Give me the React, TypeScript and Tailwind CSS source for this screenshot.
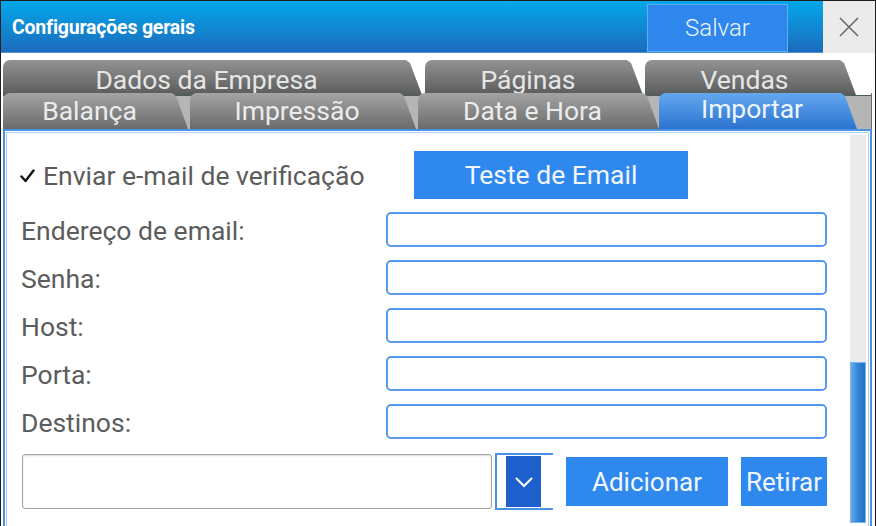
import React from "react";

const clip =
  "[clip-path:polygon(0_0,calc(100%_-_16px)_0,calc(100%_-_12px)_3px,100%_100%,0_100%)]";

function TopTab({ label, className }: { label: string; className: string }) {
  return (
    <div
      className={`${className} h-full rounded-tl-[7px] ${clip} bg-[linear-gradient(#939393,#5a5b5b)] flex items-center justify-center pr-[12px] pt-[5px] text-[26.5px] leading-none text-[#e6e6e6]`}
    >
      {label}
    </div>
  );
}

function BottomTab({
  label,
  className,
  active,
}: {
  label: string;
  className: string;
  active?: boolean;
}) {
  return (
    <div
      className={`${className} h-full rounded-tl-[7px] ${clip} flex items-center justify-center pr-[12px] text-[26.5px] leading-none ${
        active
          ? "bg-[linear-gradient(#65a8ef,#2b73d0)] text-[#eef5ff] pb-[3px]"
          : "bg-[linear-gradient(#a4a4a4,#696a6a)] text-[#ececec] pt-[1px]"
      }`}
    >
      {label}
    </div>
  );
}

function Field({ label }: { label: string }) {
  return (
    <div className="flex items-center h-[35px] mt-[13px]">
      <div className="w-[366px] pl-[1px] pt-[3px] text-[26.5px] leading-none text-[#5c5c5c]">{label}</div>
      <div className="w-[441px] h-[35px] rounded-[5px] border-2 border-[#559aea] bg-white" />
    </div>
  );
}

export default function App() {
  return (
    <div className="w-[876px] h-[526px] overflow-hidden bg-white flex flex-col border-l border-r border-t border-[#1e1e1e] [font-family:Roboto,sans-serif]">
      {/* Title bar */}
      <div className="flex h-[52px] shrink-0">
        <div className="flex-1 flex items-start bg-[linear-gradient(#03a8ea,#1c6bbd)] border-b border-[#4e8fd3]">
          <div className="pl-[11px] pt-[2px] h-full flex items-center text-[19.5px] font-bold text-white tracking-[-0.2px]">
            Configurações gerais
          </div>
          <div className="ml-auto mr-[35px] mt-[3px] w-[141px] h-[48px] bg-[#2f86ec] border border-[#62aef2] flex items-center justify-center text-[24px] font-light text-[#eaf3ff]">
            Salvar
          </div>
        </div>
        <div className="w-[52px] bg-[#ebebeb] flex items-center justify-center">
          <svg width="20" height="20" viewBox="0 0 20 20">
            <path d="M1 1 L19 19 M19 1 L1 19" stroke="#6a6a6a" strokeWidth="1.6" fill="none" />
          </svg>
        </div>
      </div>

      {/* Tabs top row */}
      <div className="flex h-[35px] mt-[7px] ml-[2px] shrink-0">
        <TopTab label="Dados da Empresa" className="w-[419px]" />
        <TopTab label="Páginas" className="w-[218px] ml-[3px]" />
        <TopTab label="Vendas" className="w-[211px] ml-[2px]" />
      </div>

      {/* Tabs bottom row */}
      <div className="flex h-[36px] -mt-[2px] ml-[2px] mr-[3px] shrink-0 bg-[linear-gradient(transparent_2px,#4b5d63_2px,#4b5d63_3px,#b5b5b5_3px)] border-r border-[#6a6a6a]">
        <BottomTab label="Balança" className="w-[185px]" />
        <BottomTab label="Impressão" className="w-[226px] ml-[2px]" />
        <BottomTab label="Data e Hora" className="w-[241px] ml-[2px]" />
        <BottomTab label="Importar" className="w-[198px]" active />
      </div>

      {/* Panel */}
      <div className="ml-[2px] mr-[3px] h-[420px] shrink-0 border-2 border-[#4a92e4] shadow-[inset_0_0_0_1px_#ffffff,inset_0_0_0_2px_#b2cff0] flex">
        <div className="flex-1 flex flex-col pl-[15px] pt-[20px]">
          {/* Row 1 */}
          <div className="flex items-center h-[48px]">
            <div className="w-[394px] flex items-center pt-[2px]">
              <span className="w-[23px] flex items-center">
                <svg width="15" height="14" viewBox="0 0 15 14">
                  <path d="M1.5 7.5 L5.5 12 L13.5 1.5" stroke="#111111" strokeWidth="2.4" fill="none" strokeLinecap="round" strokeLinejoin="round" />
                </svg>
              </span>
              <span className="text-[26.5px] leading-none text-[#5c5c5c]">Enviar e-mail de verificação</span>
            </div>
            <div className="w-[274px] h-[48px] bg-[#2f88ee] flex items-center justify-center text-[26.5px] leading-none text-[#f2f7ff]">
              Teste de Email
            </div>
          </div>

          <Field label="Endereço de email:" />
          <Field label="Senha:" />
          <Field label="Host:" />
          <Field label="Porta:" />
          <Field label="Destinos:" />

          {/* Bottom row */}
          <div className="flex items-center h-[57px] mt-[14px]">
            <div className="ml-[2px] w-[470px] h-[55px] rounded-[3px] border border-[#a3a3a3] shadow-[inset_0_1px_2px_rgba(0,0,0,0.15)] bg-white" />
            <div className="ml-[3px] w-[58px] h-[57px] border-2 border-r-0 border-[#4a90e6] flex items-center pl-[9px]">
              <div className="w-[35px] h-[51px] bg-[#1f5fcc] flex items-center justify-center">
                <svg width="20" height="12" viewBox="0 0 20 12">
                  <polyline points="2,2 10,10 18,2" stroke="#ffffff" strokeWidth="2" fill="none" />
                </svg>
              </div>
            </div>
            <div className="ml-[13px] w-[162px] h-[49px] bg-[#2f88ee] flex items-center justify-center text-[26px] leading-none text-[#f2f7ff]">
              Adicionar
            </div>
            <div className="ml-[13px] w-[86px] h-[49px] bg-[#2f88ee] flex items-center justify-center text-[26px] leading-none text-[#f2f7ff]">
              Retirar
            </div>
          </div>
        </div>

        {/* Scrollbar */}
        <div className="w-[16px] mr-[4px] mt-[4px] h-[388px] bg-[#ebebeb] flex flex-col justify-end">
          <div className="h-[161px] bg-[linear-gradient(to_right,#6aaae9,#3585d8,#2270c4)] border border-[#7fb8ee]" />
        </div>
      </div>
    </div>
  );
}
